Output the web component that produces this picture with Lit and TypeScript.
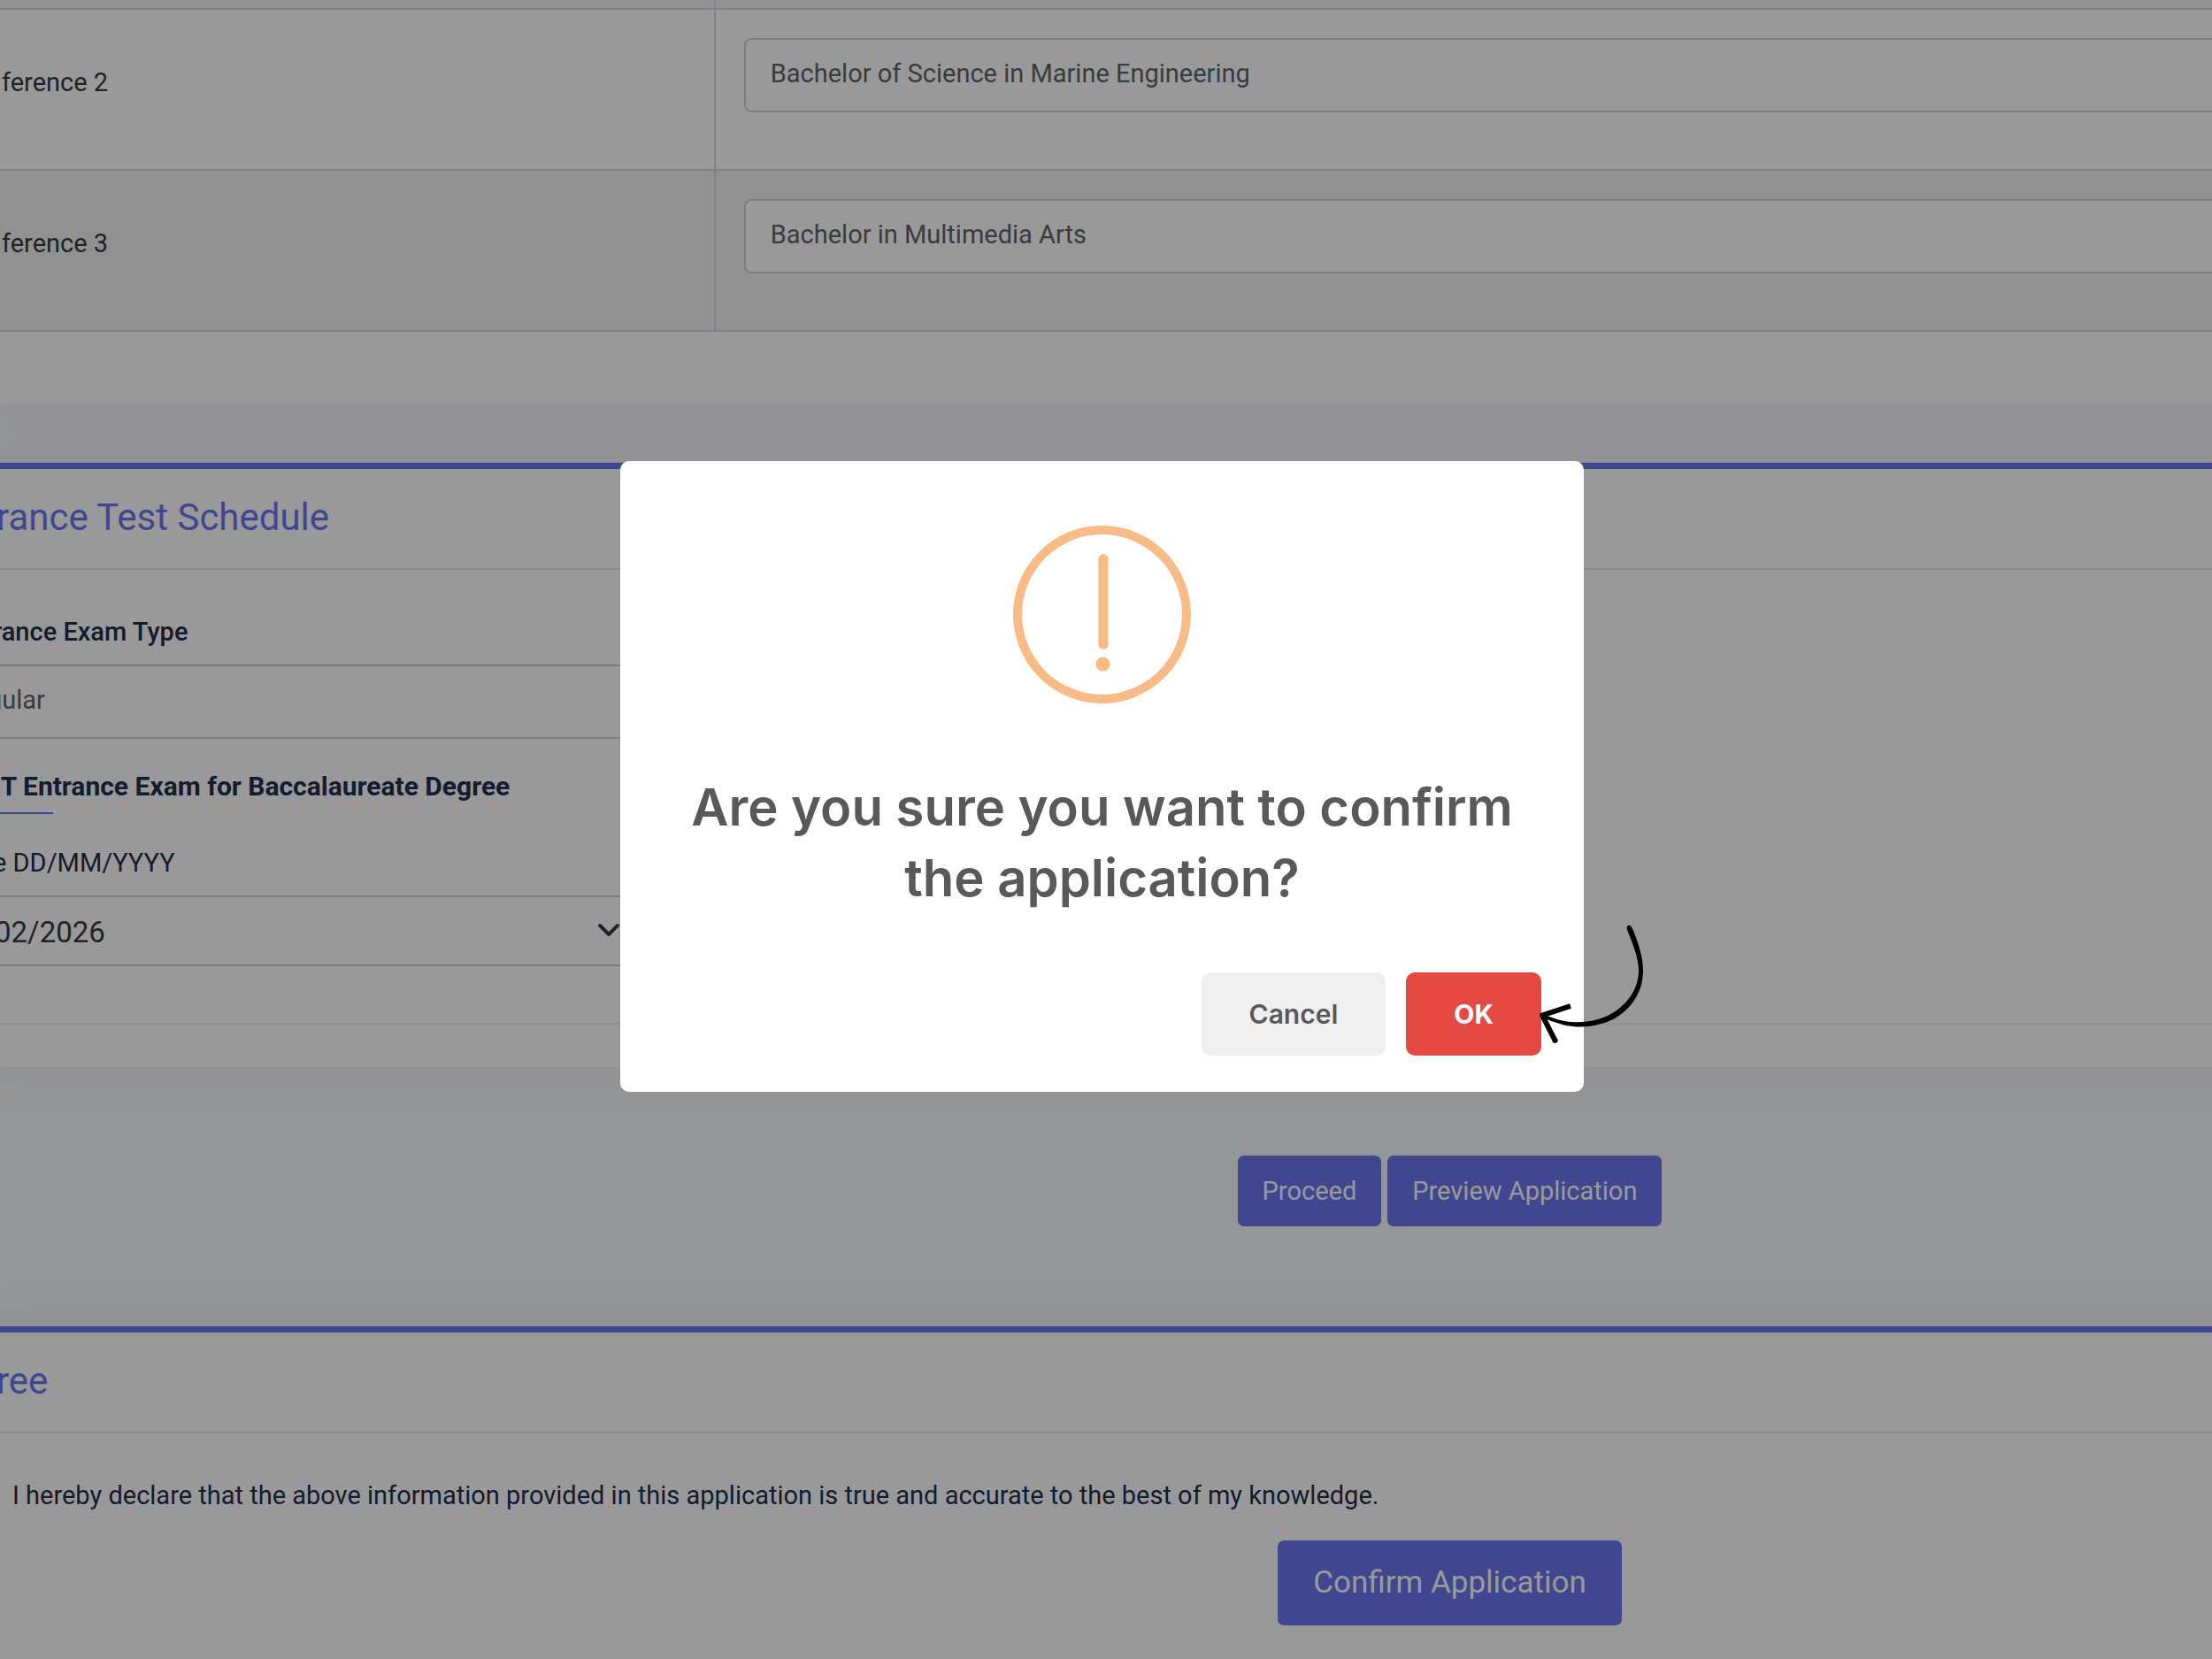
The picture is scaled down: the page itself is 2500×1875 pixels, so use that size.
import { LitElement, html, css, svg } from "lit";
import { customElement, property, state } from "lit/decorators.js";

const warningIcon = svg`
  <circle cx="100" cy="100" r="95" fill="none" stroke="#f8bb86" stroke-width="10"></circle>
  <rect x="96" y="32" width="11" height="107" rx="5" fill="#f8bb86"></rect>
  <circle cx="101" cy="156" r="8" fill="#f8bb86"></circle>
`;

@customElement("confirm-modal")
export class ConfirmModal extends LitElement {
  @property() heading = "";

  static styles = css`
    :host {
      position: fixed;
      inset: 0;
      display: grid;
      place-items: center;
      padding: 0 9px 120px 0;
      background: rgba(0, 0, 0, 0.4);
      font-family: Inter, "Liberation Sans", sans-serif;
    }
    .modal {
      position: relative;
      box-sizing: border-box;
      width: min(1089px, 100%);
      padding: 73px 48px 41px;
      border-radius: 10px;
      background: #fff;
      text-align: center;
    }
    .icon {
      display: block;
      width: 201px;
      height: 201px;
      margin: 0 auto 77px;
    }
    h2 {
      margin: 0 0 67px;
      color: #595959;
      font-size: 58px;
      font-weight: 600;
      line-height: 80px;
    }
    .actions {
      display: flex;
      justify-content: flex-end;
      gap: 23px;
    }
    button {
      height: 94px;
      padding: 0 54px;
      border: 0;
      border-radius: 10px;
      font: 600 30px/40px Inter, "Liberation Sans", sans-serif;
      cursor: pointer;
    }
    .cancel {
      background: #efefef;
      color: #595959;
    }
    .ok {
      background: #e64942;
      color: #fff;
      font-weight: 700;
    }
    .pointer {
      position: absolute;
      right: -72px;
      bottom: 52px;
      width: 124px;
      height: 138px;
      pointer-events: none;
    }
  `;

  private close(confirmed: boolean) {
    this.dispatchEvent(new CustomEvent("modal-close", { detail: confirmed }));
  }

  render() {
    return html`
      <div class="modal" role="alertdialog" aria-modal="true" aria-labelledby="heading">
        <svg class="icon" viewBox="0 0 200 200" aria-hidden="true">${warningIcon}</svg>
        <h2 id="heading">${this.heading}</h2>
        <div class="actions">
          <button class="cancel" @click=${() => this.close(false)}>Cancel</button>
          <button class="ok" @click=${() => this.close(true)}>OK</button>
        </div>
        <svg class="pointer" viewBox="0 0 124 138" aria-hidden="true">
          <path
            d="M102.300 1.800 C105 1.200 107 5 108.500 9 C114 23 119 38 119 53 C119 75 108 93 91 104.500 C74 116 45 120 25 113 C18 111 12 109 7 106.500 L8 102.500 C14 105.500 20 108 28 109.500 C46 113.500 69 111 86 100 C103 89 113.500 73 114 54 C114.300 39 107 22 101.500 8 C100.500 5 100.200 2.500 102.300 1.800Z"
            fill="#000"
          ></path>
          <path
            d="M37 93 L5 103.500 L20 133"
            fill="none"
            stroke="#000"
            stroke-width="6"
            stroke-linejoin="round"
          ></path>
          <circle cx="19.500" cy="132" r="3" fill="#000"></circle>
        </svg>
      </div>
    `;
  }
}

@customElement("app-root")
export class AppRoot extends LitElement {
  @state() private modalOpen = true;

  private preferences = [
    { id: "pref-2", label: "ference 2", value: "Bachelor of Science in Marine Engineering" },
    { id: "pref-3", label: "ference 3", value: "Bachelor in Multimedia Arts" },
  ];

  static styles = css`
    :host {
      display: block;
      height: 100vh;
      overflow: hidden;
      background: #f9fafc;
      color: #222f4b;
      font: 29px/40px Roboto, "Liberation Sans", sans-serif;
    }
    .page {
      width: 133%;
      margin-left: -24px;
    }
    .card {
      background: #fff;
      box-shadow: 0 0 60px rgba(0, 0, 0, 0.06);
    }
    .card.accent {
      border-top: 7px solid #6b76f0;
    }
    .preferences {
      padding-bottom: 81px;
    }
    table {
      width: 100%;
      border-collapse: collapse;
      table-layout: fixed;
    }
    .label-col {
      width: 25%;
    }
    th,
    td {
      box-sizing: border-box;
      border: 2px solid #d2d6df;
      padding: 32px;
      text-align: left;
      vertical-align: top;
    }
    th {
      padding: 62px 24px 0;
      color: #363c42;
      font-weight: 400;
    }
    td {
      padding-bottom: 64px;
    }
    .striped {
      background: #f2f2f2;
    }
    .spacer th,
    .spacer td {
      height: 10px;
      padding: 0;
      border-top: 0;
    }
    input,
    select {
      display: block;
      box-sizing: border-box;
      width: 100%;
      height: 84px;
      margin: 0;
      padding: 0 28px 4px;
      border: 2px solid #d1d1d3;
      border-radius: 8px;
      background: #fff;
      color: #606468;
      font: inherit;
    }
    .card-title {
      margin: 0;
      padding: 27px 20px 29px;
      border-bottom: 2px solid #e6e7ec;
      color: #6b76f0;
      font-size: 42px;
      font-weight: 400;
      line-height: 56px;
    }
    .schedule {
      margin-top: 67px;
    }
    .fields {
      display: flex;
      flex-direction: column;
      width: 23%;
      padding: 50px 0 64px;
    }
    label {
      display: block;
    }
    .field-label {
      margin-bottom: 17px;
      padding-left: 16px;
    }
    .medium {
      font-weight: 500;
    }
    .fields input {
      padding-left: 8px;
    }
    .exam-title {
      margin: 34px 0 0;
      padding: 0 0 9px 6px;
      font-size: 30px;
      font-weight: 700;
      line-height: 40px;
    }
    .rule {
      width: 84px;
      height: 2px;
      margin-bottom: 35px;
      background: #6b76f0;
    }
    .select-wrap {
      position: relative;
    }
    .fields select {
      height: 80px;
      padding: 4px 16px 0;
      appearance: none;
      color: #363c42;
      font-size: 33px;
    }
    .chevron {
      position: absolute;
      top: 31px;
      right: 40px;
      width: 26px;
      height: 18px;
      pointer-events: none;
    }
    .card-footer {
      height: 48px;
      border-top: 2px solid #f0f0f2;
    }
    .actions {
      display: flex;
      justify-content: center;
      gap: 7px;
      padding: 100px 0 113px;
    }
    button {
      height: 80px;
      padding: 0 28px;
      border: 0;
      border-radius: 7px;
      background: #6b76f0;
      color: #fff;
      font: inherit;
      cursor: pointer;
    }
    .large {
      height: 96px;
      padding: 0 40px;
      font-size: 35px;
    }
    .declaration {
      margin: 0;
      padding: 50px 38px 31px;
    }
    .confirm {
      display: flex;
      justify-content: center;
      padding-bottom: 100px;
    }
  `;

  render() {
    return html`
      <main class="page">
        <section class="card preferences">
          <table>
            <colgroup>
              <col class="label-col" />
              <col />
            </colgroup>
            <tbody>
              <tr class="spacer striped">
                <th></th>
                <td></td>
              </tr>
              ${this.preferences.map(
                (p, i) => html`
                  <tr class=${i % 2 ? "striped" : ""}>
                    <th scope="row"><label for=${p.id}>${p.label}</label></th>
                    <td><input id=${p.id} type="text" .value=${p.value} /></td>
                  </tr>
                `
              )}
            </tbody>
          </table>
        </section>

        <section class="card accent schedule">
          <h2 class="card-title">rance Test Schedule</h2>
          <div class="fields">
            <label class="field-label medium" for="exam-type">rance Exam Type</label>
            <input id="exam-type" type="text" .value=${"gular"} />
            <h3 class="exam-title">BT Entrance Exam for Baccalaureate Degree</h3>
            <div class="rule"></div>
            <label class="field-label" for="exam-date">e DD/MM/YYYY</label>
            <div class="select-wrap">
              <select id="exam-date">
                <option>02/2026</option>
              </select>
              <svg class="chevron" viewBox="0 0 26 18" aria-hidden="true">
                <path d="M3 3 L13 13 L23 3" fill="none" stroke="#343a40" stroke-width="4" stroke-linecap="round" stroke-linejoin="round"></path>
              </svg>
            </div>
          </div>
          <div class="card-footer"></div>
        </section>

        <div class="actions">
          <button type="button">Proceed</button>
          <button type="button">Preview Application</button>
        </div>

        <section class="card accent">
          <h2 class="card-title">ree</h2>
          <p class="declaration">
            I hereby declare that the above information provided in this application is true and
            accurate to the best of my knowledge.
          </p>
          <div class="confirm">
            <button class="large" type="button" @click=${() => (this.modalOpen = true)}>
              Confirm Application
            </button>
          </div>
        </section>
      </main>
      ${this.modalOpen
        ? html`<confirm-modal
            heading="Are you sure you want to confirm the application?"
            @modal-close=${() => (this.modalOpen = false)}
          ></confirm-modal>`
        : null}
    `;
  }
}
